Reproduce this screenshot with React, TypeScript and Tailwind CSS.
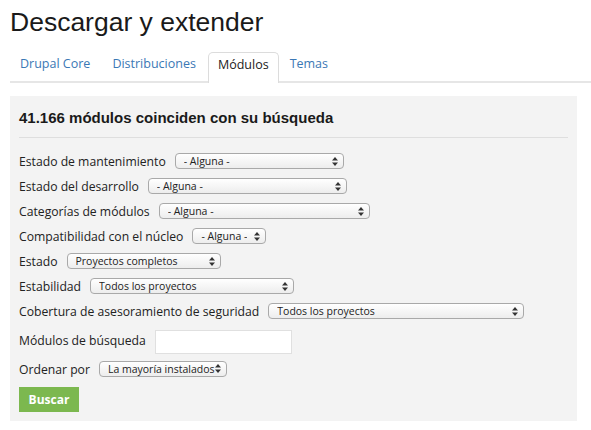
import React from 'react'

const sans = { fontFamily: '"Open Sans", "DejaVu Sans", sans-serif' }

function Arrows() {
  return (
    <svg width="6" height="9" viewBox="0 0 6 9" className="shrink-0">
      <path d="M3 0 L6 3.5 L0 3.5 Z" fill="#333" />
      <path d="M3 9 L6 5.5 L0 5.5 Z" fill="#333" />
    </svg>
  )
}

function Select({ value, width }: { value: string; width: string }) {
  return (
    <div
      className={`${width} h-[16px] mb-[3px] flex items-center justify-between pl-[8px] pr-[5px] rounded-[4px] border border-[#a9a9a9] bg-gradient-to-b from-white to-[#ededed] text-[10.5px] text-[#222] leading-[14px]`}
      style={sans}
    >
      <span className="whitespace-nowrap overflow-hidden">{value}</span>
      <Arrows />
    </div>
  )
}

const rows: { label: string; value: string; width: string }[] = [
  { label: 'Estado de mantenimiento', value: '- Alguna -', width: 'w-[169px]' },
  { label: 'Estado del desarrollo', value: '- Alguna -', width: 'w-[199px]' },
  { label: 'Categorías de módulos', value: '- Alguna -', width: 'w-[211px]' },
  { label: 'Compatibilidad con el núcleo', value: '- Alguna -', width: 'w-[74px]' },
  { label: 'Estado', value: 'Proyectos completos', width: 'w-[154px]' },
  { label: 'Estabilidad', value: 'Todos los proyectos', width: 'w-[204px]' },
  { label: 'Cobertura de asesoramiento de seguridad', value: 'Todos los proyectos', width: 'w-[256px]' },
]

export default function App() {
  return (
    <div className="w-[591px] h-[430px] bg-white overflow-hidden">
      <h1
        className="pl-[10px] pt-[7px] text-[26.5px] leading-[30px] text-[#1a1a1a]"
        style={{ fontFamily: '"Liberation Sans", Arial, sans-serif' }}
      >
        Descargar y extender
      </h1>

      {/* Tabs */}
      <div className="ml-[10px] mt-[16px] flex items-end h-[30px] border-b-2 border-[#e6e6e6] text-[12.5px]" style={sans}>
        <a className="px-[10px] h-[29px] leading-[24px] text-[#3b78b5]">Drupal Core</a>
        <a className="ml-[2px] px-[10px] h-[29px] leading-[24px] text-[#3b78b5]">Distribuciones</a>
        <a className="ml-[2px] -mb-[2px] px-[9px] h-[31px] leading-[24px] text-[#222] bg-white border border-b-0 border-[#dcdcdc] rounded-t-[5px]">
          Módulos
        </a>
        <a className="ml-[1px] px-[10px] h-[29px] leading-[24px] text-[#3b78b5]">Temas</a>
      </div>

      {/* Panel */}
      <div className="ml-[10px] mt-[13px] w-[567px] bg-[#f3f3f3] pl-[9px] pr-[9px] pt-[13px] pb-[9px]">
        <h2
          className="text-[15px] leading-[18px] font-bold text-[#1a1a1a]"
          style={{ fontFamily: '"Liberation Sans", Arial, sans-serif' }}
        >
          41.166 módulos coinciden con su búsqueda
        </h2>
        <div className="mt-[10px] h-px bg-[#dedede]" />

        <div className="mt-[12px] flex flex-col text-[12.2px] text-[#222]" style={sans}>
          {rows.map(r => (
            <div key={r.label} className="h-[25px] flex items-center gap-[9px]">
              <span>{r.label}</span>
              <Select value={r.value} width={r.width} />
            </div>
          ))}
          <div className="h-[33px] flex items-center gap-[9px]">
            <span>Módulos de búsqueda</span>
            <div className="w-[137px] h-[24px] bg-white border border-[#e0e0e0]" />
          </div>
          <div className="h-[24px] flex items-center gap-[9px]">
            <span>Ordenar por</span>
            <Select value="La mayoría instalados" width="w-[128px]" />
          </div>
          <button className="mt-[5px] w-[60px] h-[25px] bg-[#7cb84f] text-white text-[12px] font-bold self-start">
            Buscar
          </button>
        </div>
      </div>
    </div>
  )
}
